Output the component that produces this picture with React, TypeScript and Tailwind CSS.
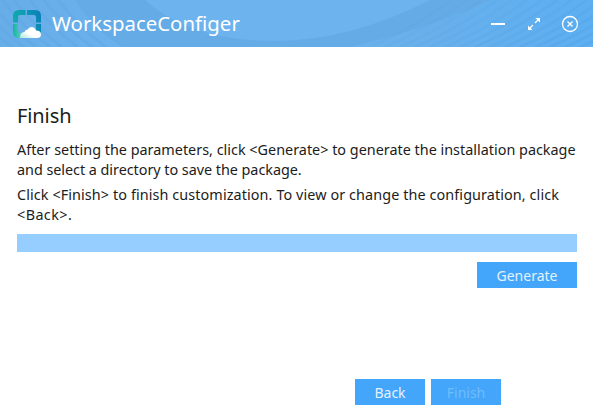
import type { ReactNode } from "react";

const leftStripes = [-36, -24, -12, 2, 14, 30, 44, 58];
const rightStripes = Array.from({ length: 17 }, (_, i) => i);

const HeaderBackground = () => (
  <svg className="absolute inset-0 h-full w-full" viewBox="0 0 593 47" preserveAspectRatio="none">
    <defs>
      <linearGradient id="bar" x1="0" x2="1" y1="0" y2="0">
        <stop offset="0" stopColor="#67aee9" />
        <stop offset="0.2" stopColor="#6bb1ed" />
        <stop offset="0.7" stopColor="#6ab0eb" />
        <stop offset="1" stopColor="#5caff2" />
      </linearGradient>
    </defs>
    <rect width="593" height="47" fill="url(#bar)" />
    <path d="M75 0Q92 28 122 47H350Q430 28 490 0Z" fill="#65abe6" />
    <path d="M145 0Q190 41 275 41Q350 41 430 0Z" fill="#6db3ee" />
    {leftStripes.map((x) => (
      <path
        key={x}
        d={`M${x} 0q22 28 48 47`}
        fill="none"
        stroke="#5fa6e2"
        strokeWidth="3"
        opacity="0.4"
      />
    ))}
    {rightStripes.map((i) => (
      <path
        key={i}
        d={`M${370 + i * 15} 47q42 -18 82 -47`}
        fill="none"
        stroke="#559fdf"
        strokeWidth="2.500"
        opacity={0.08 + i * 0.022}
      />
    ))}
  </svg>
);

const Logo = () => (
  <svg className="h-7 w-7" viewBox="0 0 28 28">
    <defs>
      <linearGradient id="ring" x1="0" y1="0.6" x2="1" y2="0.3">
        <stop offset="0" stopColor="#10aeaa" />
        <stop offset="0.5" stopColor="#0e9cb4" />
        <stop offset="1" stopColor="#0a80b8" />
      </linearGradient>
      <linearGradient id="corner" x1="0" y1="0" x2="1" y2="0">
        <stop offset="0" stopColor="#14b3a4" />
        <stop offset="0.45" stopColor="#4fcbb8" />
        <stop offset="0.85" stopColor="#ffffff" />
      </linearGradient>
      <linearGradient id="cloud" x1="0" y1="1" x2="0.7" y2="0.3">
        <stop offset="0" stopColor="#a9e6dd" />
        <stop offset="0.6" stopColor="#ffffff" />
      </linearGradient>
    </defs>
    <path
      d="M0 12.500V6Q0 0 6 0H12.500V5H7Q5 5 5 7V12.500ZM14 0H22Q28 0 28 6V12.500H23V7Q23 5 21 5H14ZM23 14H28V24H23Z"
      fill="url(#ring)"
    />
    <path d="M0 14H5V20Q5 23 8 23H16V28H6Q0 28 0 22Z" fill="url(#corner)" />
    <path
      d="M7 28Q7 22.500 11.500 22Q12 19.500 14.500 19.500Q16 17 18.500 17Q22 17 23 20.500Q28 20.500 28 24.500Q28 28 24 28Z"
      fill="url(#cloud)"
    />
  </svg>
);

const Line = ({ className = "", children }: { className?: string; children: ReactNode }) => (
  <span className={`block whitespace-nowrap ${className}`}>{children}</span>
);

const App = () => {
  return (
    <div className="flex h-[413px] w-[593px] flex-col overflow-hidden bg-white font-['Noto_Sans',sans-serif] text-[#1c1c1c]">
      {/* Title bar */}
      <header className="relative h-[47px] shrink-0 overflow-hidden">
        <HeaderBackground />
        <div className="relative flex h-full items-center pl-[13px] text-white">
          <Logo />
          <h1 className="ml-[11px] text-[20.4px] leading-[47px] whitespace-nowrap">WorkspaceConfiger</h1>
          <div className="ml-auto flex items-center pr-[14px]">
            <button aria-label="Minimize">
              <svg className="block h-[18px] w-[14px]" viewBox="0 0 14 18">
                <path d="M0 8h14v2H0z" fill="currentColor" />
              </svg>
            </button>
            <button aria-label="Maximize" className="ml-[22px]">
              <svg className="block h-[14px] w-[14px]" viewBox="0 0 14 14">
                <path d="M8.500 1H13V5.500ZM1 8.500V13H5.500Z" fill="currentColor" />
                <path d="M12 2L8 6M6 8L2 12" stroke="currentColor" strokeWidth="1.300" />
              </svg>
            </button>
            <button aria-label="Close" className="ml-[20px]">
              <svg className="block h-[18px] w-[18px]" viewBox="0 0 18 18" fill="none" stroke="currentColor">
                <circle cx="9" cy="9" r="7.500" strokeWidth="1.300" />
                <path d="M6.500 6.500L11.500 11.500M11.500 6.500L6.500 11.500" strokeWidth="1.300" />
              </svg>
            </button>
          </div>
        </div>
      </header>

      {/* Finish step */}
      <main className="flex flex-1 flex-col px-4 pl-[17px]">
        <h2 className="mt-[54px] text-[20px] leading-[30px] tracking-[-0.1px]">Finish</h2>
        <p className="mt-[9px] text-[14.4px] leading-5">
          <Line>After setting the parameters, click &lt;Generate&gt; to generate the installation package</Line>
          <Line className="tracking-[-0.04px]">and select a directory to save the package.</Line>
        </p>
        <p className="mt-[5px] text-[14.4px] leading-5">
          <Line className="tracking-[0.09px]">
            Click &lt;Finish&gt; to finish customization. To view or change the configuration, click
          </Line>
          <Line className="tracking-[0.4px]">&lt;Back&gt;.</Line>
        </p>
        <div className="mt-[9px] h-[18px] bg-[#96cfff]" />
        <button className="mt-[10px] h-[26px] w-[100px] self-end bg-[#43a6fa] text-[14px] text-[#e3f1ff]">
          Generate
        </button>
        <div className="mt-auto mr-[76px] mb-2 flex justify-end gap-1.5 text-[14px]">
          <button className="h-[26px] w-[70px] bg-[#43a6fa] text-[#e3f1ff]">Back</button>
          <button className="h-[26px] w-[70px] bg-[#43a6fa] text-[#70bcfc]" disabled>
            Finish
          </button>
        </div>
      </main>
    </div>
  );
};

export default App;
